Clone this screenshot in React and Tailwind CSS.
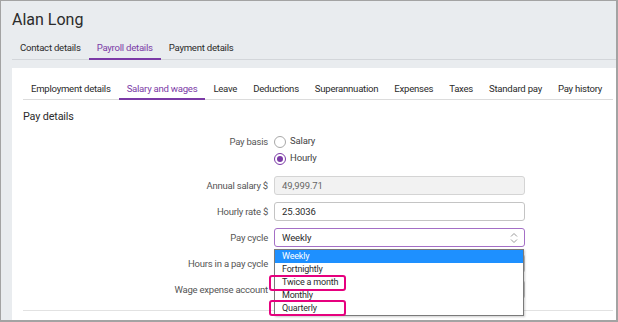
import React from "react";

const F = { fontFamily: "Roboto, 'Noto Sans', sans-serif" };

function Radio({ checked, label }) {
  return (
    <div className="flex items-center h-[17px] gap-[4px]">
      {checked ? (
        <span className="w-[12px] h-[12px] rounded-full border border-[#7b3aa6] flex items-center justify-center bg-white">
          <span className="w-[6px] h-[6px] rounded-full bg-[#7b3aa6]" />
        </span>
      ) : (
        <span className="w-[12px] h-[12px] rounded-full border border-[#a8a8a8] bg-white" />
      )}
      <span className="text-[9.5px] tracking-[-0.15px] text-[#444]">{label}</span>
    </div>
  );
}

function Row({ label, children, className = "" }) {
  return (
    <div className={"flex " + className}>
      <div className="w-[245px] text-right text-[9.5px] tracking-[-0.22px] text-[#555] leading-[19px] whitespace-nowrap">
        {label}
      </div>
      <div className="ml-[6px] w-[251px]">{children}</div>
    </div>
  );
}

export default function App() {
  const topTabs = ["Contact details", "Payroll details", "Payment details"];
  const innerTabs = [
    "Employment details",
    "Salary and wages",
    "Leave",
    "Deductions",
    "Superannuation",
    "Expenses",
    "Taxes",
    "Standard pay",
    "Pay history",
  ];
  const options = ["Weekly", "Fortnightly", "Twice a month", "Monthly", "Quarterly"];
  return (
    <div
      style={F}
      className="w-[618px] h-[322px] overflow-hidden bg-[#e9ecef] border-l border-t border-r-2 border-b-2 border-[#a3a3a3] flex flex-col pl-[11px]"
    >
      <div className="h-[34px] pt-[7px] text-[16px] leading-[24px] text-[#2b2b2b]">Alan Long</div>
      <div className="flex border-b border-[#d3d6da] h-[25px]">
        {topTabs.map((t, i) => (
          <div
            key={t}
            className={
              "px-[8px] pt-[6px] pb-[4px] leading-[13px] text-[9.6px] tracking-[-0.25px] -mb-px border-b-2 " +
              (i === 1 ? "border-[#7b3aa6] text-[#7b3aa6]" : "border-transparent text-[#2b2b2b]")
            }
          >
            {t}
          </div>
        ))}
      </div>
      <div className="mt-[8px] flex-1 bg-white pl-[11px] pr-[3px] pt-[8px] flex flex-col">
        <div className="flex border-b border-[#dcdcdc] h-[24px]">
          {innerTabs.map((t, i) => (
            <div
              key={t}
              className={
                "px-[8px] pt-[6px] pb-[3px] leading-[13px] text-[9.6px] tracking-[-0.26px] whitespace-nowrap -mb-px border-b-2 " +
                (i === 1 ? "border-[#7b3aa6] text-[#7b3aa6]" : "border-transparent text-[#2b2b2b]")
              }
            >
              {t}
            </div>
          ))}
        </div>
        <div className="mt-[10px] text-[10.8px] tracking-[-0.15px] leading-[14px] text-[#2b2b2b]">Pay details</div>
        <div className="relative flex flex-col border-b border-[#e2e2e2] pb-[11px]">
          <div className="flex mt-[9px]">
            <div className="w-[245px] text-right text-[9.5px] tracking-[-0.22px] text-[#555] leading-[17px]">Pay basis</div>
            <div className="ml-[6px] flex flex-col">
              <Radio label="Salary" />
              <Radio checked label="Hourly" />
            </div>
          </div>
          <Row label="Annual salary $" className="mt-[9px]">
            <div className="h-[19px] rounded-[3px] border border-[#d4d4d4] bg-[#f2f2f2] px-[7px] text-[9.5px] tracking-[-0.1px] leading-[17px] text-[#666]">
              49,999.71
            </div>
          </Row>
          <Row label="Hourly rate $" className="mt-[7px]">
            <div className="h-[19px] rounded-[3px] border border-[#c4c4c4] bg-white px-[7px] text-[9.5px] tracking-[-0.1px] leading-[17px] text-[#2b2b2b]">
              25.3036
            </div>
          </Row>
          <Row label="Pay cycle" className="mt-[7px]">
            <div className="h-[19px] rounded-[3px] border border-[#a46fc6] bg-white pl-[7px] pr-[6px] text-[9.5px] tracking-[-0.1px] leading-[17px] text-[#2b2b2b] flex items-center justify-between">
              <span>Weekly</span>
              <svg width="8" height="12" viewBox="0 0 8 12" fill="none" stroke="#9a9a9a" strokeWidth="1">
                <path d="M1 4.5 L4 1.5 L7 4.5" />
                <path d="M1 7.5 L4 10.5 L7 7.5" />
              </svg>
            </div>
          </Row>
          <Row label="Hours in a pay cycle" className="mt-[7px]">
            <div className="h-[19px] rounded-[3px] border border-[#c4c4c4] bg-white" />
          </Row>
          <Row label="Wage expense account" className="mt-[7px]">
            <div className="h-[19px] rounded-[3px] border border-[#c4c4c4] bg-white" />
          </Row>

          <div className="absolute left-[251px] top-[125px] w-[250px] border border-[#7a7a7a] bg-white shadow-[1px_1px_2px_rgba(0,0,0,0.2)]">
            {options.map((o, i) => (
              <div
                key={o}
                className={
                  "h-[13px] leading-[13px] pl-[7px] text-[9px] tracking-[-0.2px] " +
                  (i === 0 ? "bg-[#1e90ff] text-white" : "text-[#2b2b2b]")
                }
              >
                {o}
              </div>
            ))}
          </div>
          <div className="absolute left-[246px] top-[151px] w-[77px] h-[16px] border-2 border-[#e6007e] rounded-[3px]" />
          <div className="absolute left-[246px] top-[176px] w-[77px] h-[16px] border-2 border-[#e6007e] rounded-[3px]" />
        </div>
      </div>
    </div>
  );
}
